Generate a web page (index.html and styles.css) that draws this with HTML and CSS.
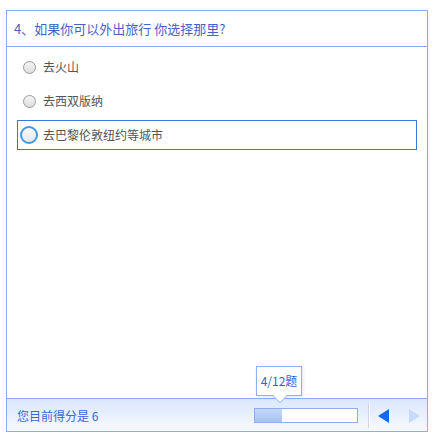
FILE: index.html
```html
<!DOCTYPE html>
<html lang="zh">
<head>
  <meta charset="UTF-8" />
  <title>问卷</title>
  <link rel="stylesheet" href="styles.css">
</head>
<body>
<div class="quiz">
  <div class="quiz-head">4、如果你可以外出旅行 你选择那里?</div>

  <div class="quiz-body">
    <label class="option">
      <span class="radio-box"><span class="radio"></span></span>
      <span class="option-text">去火山</span>
    </label>
    <label class="option">
      <span class="radio-box"><span class="radio"></span></span>
      <span class="option-text">去西双版纳</span>
    </label>
    <label class="option selected">
      <span class="radio-box"><span class="radio"></span></span>
      <span class="option-text">去巴黎伦敦纽约等城市</span>
    </label>
  </div>

  <div class="quiz-foot">
    <span class="score">您目前得分是 6</span>
    <div class="progress">
      <div class="progress-fill" style="width: 26%"></div>
      <div class="tip">4/12题</div>
    </div>
    <span class="divider"></span>
    <span class="arrow prev"></span>
    <span class="arrow next"></span>
  </div>
</div>
</body>
</html>
```

FILE: styles.css
```css
body {
  margin: 10px 0 0 6px;
  font-family: "Noto Sans CJK SC", "Liberation Sans", sans-serif;
  background: #fff;
}
.quiz {
  width: 420px;
  height: 420px;
  border: 1px solid #8eaaf6;
  display: flex;
  flex-direction: column;
}
.quiz-head {
  height: 35px;
  border-bottom: 1px solid #8eaaf6;
  padding-left: 7px;
  font-size: 13px;
  line-height: 36px;
  color: #4a5fc4;
}
.quiz-body {
  flex: 1;
  padding: 5px 10px 0 10px;
}
.option {
  height: 28px;
  margin-bottom: 4px;
  border: 1px solid transparent;
  padding-left: 2px;
  display: flex;
  align-items: center;
  gap: 5px;
  cursor: pointer;
}
.option.selected {
  border-color: #3a78d6;
}
.radio-box {
  width: 18px;
  height: 18px;
  display: flex;
  align-items: center;
  justify-content: center;
}
.radio {
  width: 11px;
  height: 11px;
  border: 1px solid #9a9a9a;
  border-radius: 50%;
  background: linear-gradient(#f6f6f6, #dcdcdc);
}
.selected .radio {
  width: 14px;
  height: 14px;
  border: 2px solid #3b9be6;
  background: linear-gradient(#fafafa, #e8e8e8);
}
.option-text {
  font-size: 12px;
  line-height: 16px;
  color: #555;
}
.quiz-foot {
  height: 32px;
  border-top: 1px solid #8eaaf6;
  background: linear-gradient(#dae7fc, #f7faff);
  display: flex;
  align-items: center;
  padding: 0 7px 0 10px;
}
.score {
  flex: 1;
  font-size: 12px;
  color: #3768e0;
}
.progress {
  position: relative;
  width: 102px;
  height: 13px;
  border: 1px solid #8eaeee;
  background: #fff;
  margin-top: 1px;
}
.progress-fill {
  height: 100%;
  background: linear-gradient(#c5d8fa, #a6c2f4);
}
.tip {
  position: absolute;
  left: 1px;
  bottom: 26px;
  width: 44px;
  height: 28px;
  border: 1px solid #8eb0f0;
  background: #fff;
  box-shadow: 1px 1px 3px rgba(120, 150, 210, 0.25);
  font-size: 12px;
  line-height: 28px;
  text-align: center;
  color: #3462d6;
}
.tip::before,
.tip::after {
  content: "";
  position: absolute;
  left: 15px;
  border-style: solid;
  border-color: transparent;
}
.tip::before {
  top: 100%;
  border-width: 8px 8px 0 8px;
  border-top-color: #8eb0f0;
}
.tip::after {
  top: 100%;
  left: 16px;
  border-width: 7px 7px 0 7px;
  border-top-color: #fff;
}
.divider {
  width: 1px;
  height: 25px;
  margin: 0 9px 0 10px;
  background: #c9d8f0;
  box-shadow: 1px 0 0 #fff;
}
.arrow {
  width: 0;
  height: 0;
  border-top: 7px solid transparent;
  border-bottom: 7px solid transparent;
  margin-top: 2px;
}
.prev {
  border-right: 11px solid #1468f0;
}
.next {
  margin-left: 20px;
  border-left: 11px solid #c6dafa;
}
```
